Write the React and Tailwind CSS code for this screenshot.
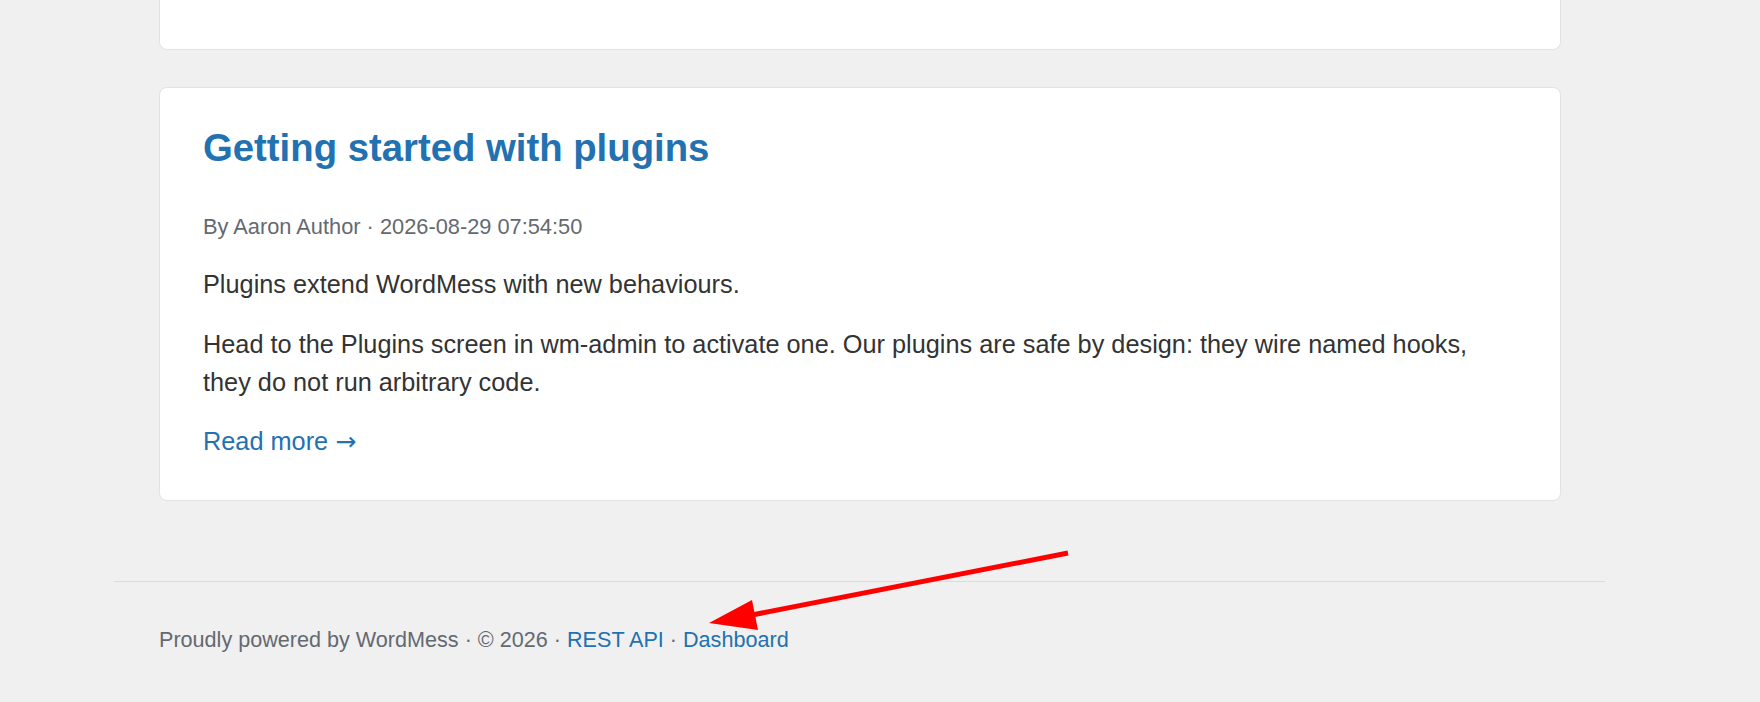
export default function App() {
  return (
    <div className="relative min-h-[702px] bg-[#f0f0f0] font-['Liberation_Sans',Arial,sans-serif] overflow-hidden">
      <div className="pl-[114px] pr-[155px]">
        <main className="pl-[45px] pr-[44px]">
          {/* tail of the previous post card, scrolled mostly out of view */}
          <div className="h-[50px] bg-white border border-t-0 border-[#e2e2e2] rounded-b-[8px]" />

          <article className="mt-[37px] bg-white border border-[#e2e2e2] rounded-[8px] pl-[43px] pr-[43px] pt-[37px] pb-[39px]">
            <h2 className="text-[38.3px] leading-[1.2] font-bold text-[#2271b1]">
              <a href="#">Getting started with plugins</a>
            </h2>
            <p className="mt-[40px] text-[21.8px] leading-[32px] text-[#646970]">
              By Aaron Author · 2026-08-29 07:54:50
            </p>
            <div className="mt-[22px] text-[25.3px] leading-[38px] text-[#333333]">
              <p>Plugins extend WordMess with new behaviours.</p>
              <p className="mt-[22px]">
                Head to the Plugins screen in wm-admin to activate one. Our plugins are safe by design: they wire named hooks,
                they do not run arbitrary code.
              </p>
            </div>
            <p className="mt-[21px] text-[25.3px] leading-[38px]">
              <a href="#" className="text-[#2271b1]">
                Read more <span className="font-['DejaVu_Sans',sans-serif] text-[25px]">→</span>
              </a>
            </p>
          </article>
        </main>

        <footer className="mt-[80px] border-t border-[#dcdcde] pt-[42px] pl-[45px]">
          <p className="text-[21.6px] leading-[32px] text-[#646970]">
            Proudly powered by WordMess · © 2026 · <a href="#" className="text-[#2271b1]">REST API</a> ·{" "}
            <a href="#" className="text-[#2271b1]">Dashboard</a>
          </p>
        </footer>
      </div>

      {/* callout arrow pointing at the Dashboard link */}
      <svg className="absolute inset-0 pointer-events-none" width="1760" height="702" viewBox="0 0 1760 702">
        <line x1="1068" y1="553" x2="752" y2="615" stroke="#ff0000" strokeWidth="5" />
        <polygon points="709,623 752,600 758,630" fill="#ff0000" />
      </svg>
    </div>
  );
}
